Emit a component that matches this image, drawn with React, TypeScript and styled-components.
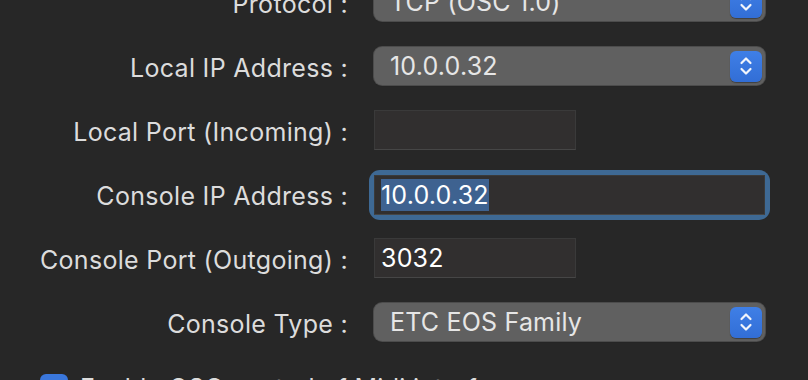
import styled, { createGlobalStyle } from "styled-components";

const GlobalStyle = createGlobalStyle`
  html, body {
    margin: 0;
    padding: 0;
    background-color: #272727;
    overflow: hidden;
  }
  body {
    font-family: Inter, "Noto Sans", sans-serif;
  }
`;

type Row =
  | { label: string; kind: "popup"; value: string }
  | { label: string; kind: "field"; value: string; width: "short" | "long"; focused?: boolean };

const rows: Row[] = [
  { label: "Protocol :", kind: "popup", value: "TCP (OSC 1.0)" },
  { label: "Local IP Address :", kind: "popup", value: "10.0.0.32" },
  { label: "Local Port (Incoming) :", kind: "field", value: "", width: "short" },
  { label: "Console IP Address :", kind: "field", value: "10.0.0.32", width: "long", focused: true },
  { label: "Console Port (Outgoing) :", kind: "field", value: "3032", width: "short" },
  { label: "Console Type :", kind: "popup", value: "ETC EOS Family" },
];

function StepperIcon() {
  return (
    <svg width="16" height="22" viewBox="0 0 16 22" fill="none">
      <path d="M3.5 8 L8 3.5 L12.5 8" stroke="#f2f5fb" strokeWidth="2.2" strokeLinecap="round" strokeLinejoin="round" />
      <path d="M3.5 14 L8 18.5 L12.5 14" stroke="#f2f5fb" strokeWidth="2.2" strokeLinecap="round" strokeLinejoin="round" />
    </svg>
  );
}

export default function App() {
  return (
    <>
      <GlobalStyle />
      <Panel>
        <Form>
          {rows.map((row) => (
            <FormRow key={row.label}>
              <Label>{row.label}</Label>
              {row.kind === "popup" ? (
                <Popup>
                  <PopupValue>{row.value}</PopupValue>
                  <Stepper>
                    <StepperIcon />
                  </Stepper>
                </Popup>
              ) : row.focused ? (
                <FocusRing>
                  <TextField $width={row.width}>
                    <Selected>{row.value}</Selected>
                  </TextField>
                </FocusRing>
              ) : (
                <TextField $width={row.width}>{row.value}</TextField>
              )}
            </FormRow>
          ))}
        </Form>
        <CheckRow>
          <Checkbox>
            <svg width="18" height="18" viewBox="0 0 18 18" fill="none">
              <path d="M4 9.5 L7.5 13 L14 5" stroke="#ffffff" strokeWidth="2.4" strokeLinecap="round" strokeLinejoin="round" />
            </svg>
          </Checkbox>
          <CheckLabel>Enable OSC control of Midi interface</CheckLabel>
        </CheckRow>
      </Panel>
    </>
  );
}

const Panel = styled.div`
  width: 808px;
  height: 380px;
  overflow: hidden;
  background-color: #272727;
`;

const Form = styled.div`
  display: flex;
  flex-direction: column;
  margin-top: -30px;
`;

const FormRow = styled.div`
  display: grid;
  grid-template-columns: 348px 1fr;
  column-gap: 26px;
  align-items: center;
  height: 64px;
`;

const Label = styled.div`
  text-align: right;
  padding-top: 3px;
  font-size: 25px;
  letter-spacing: 0.3px;
  color: #dcdcdc;
  white-space: nowrap;
`;

const Popup = styled.div`
  box-sizing: border-box;
  width: 391px;
  height: 38px;
  display: flex;
  align-items: center;
  justify-content: space-between;
  padding: 0 3px 0 16px;
  border-radius: 8px;
  background-color: #606060;
  box-shadow: 0 0 0 1px #4c4c4c, 0 1px 1px rgba(0, 0, 0, 0.35);
`;

const PopupValue = styled.span`
  font-size: 25px;
  letter-spacing: 0.2px;
  color: #e6e6e6;
  white-space: nowrap;
`;

const Stepper = styled.div`
  width: 32px;
  height: 31px;
  border-radius: 6px;
  display: flex;
  align-items: center;
  justify-content: center;
  background: linear-gradient(#3f7fe6, #326ed6);
  box-shadow: 0 1px 1px rgba(0, 0, 0, 0.35);
`;

const TextField = styled.div<{ $width: "short" | "long" }>`
  box-sizing: border-box;
  width: ${(p) => (p.$width === "short" ? "202px" : "391px")};
  height: 40px;
  display: flex;
  align-items: center;
  padding: 0 6px;
  background-color: #312f2f;
  border: 1px solid #3a3a3a;
  border-bottom-color: #464646;
  font-size: 25px;
  letter-spacing: 0.2px;
  color: #ffffff;
  white-space: nowrap;
`;

const FocusRing = styled.div`
  width: 391px;
  border-radius: 6px;
  box-shadow: 0 0 0 5px #3e6994;
  position: relative;
  top: 1px;
`;

const Selected = styled.span`
  background-color: #3e6290;
  padding: 2px 0;
  line-height: 28px;
`;

const CheckRow = styled.div`
  display: flex;
  align-items: center;
  gap: 12px;
  margin-left: 40px;
  margin-top: 19px;
`;

const Checkbox = styled.div`
  width: 28px;
  height: 28px;
  border-radius: 6px;
  background-color: #3a77dc;
  display: flex;
  align-items: center;
  justify-content: center;
`;

const CheckLabel = styled.span`
  font-size: 25px;
  letter-spacing: 0.3px;
  color: #dcdcdc;
`;
